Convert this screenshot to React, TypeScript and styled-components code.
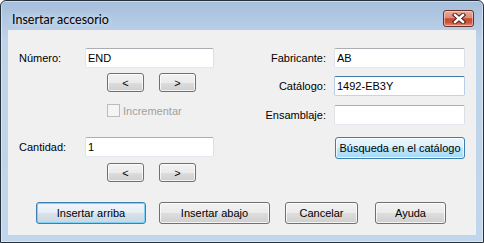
import React from 'react';
import styled, { createGlobalStyle } from 'styled-components';

const GlobalStyle = createGlobalStyle`
  html, body {
    margin: 0;
    padding: 0;
    background: #ffffff;
  }
  body {
    font-family: "Liberation Sans", Arial, sans-serif;
    font-size: 11px;
    color: #000;
  }
`;

const Window = styled.div`
  box-sizing: border-box;
  width: 484px;
  height: 243px;
  display: flex;
  flex-direction: column;
  border: 1px solid #26303b;
  border-radius: 6px 6px 0 0;
  padding: 0 7px 7px 7px;
  background: linear-gradient(#a5bedb 0px, #b3cae4 20px, #bed4eb 40px, #c0d6ed 100%);
  box-shadow: inset 0 0 0 1px rgba(255, 255, 255, 0.45);
`;

const TitleBar = styled.div`
  height: 29px;
  display: flex;
  align-items: flex-start;
  justify-content: space-between;
  padding: 0 2px 0 4px;
`;

const Title = styled.div`
  font-family: "Lato", "Liberation Sans", sans-serif;
  font-size: 12.5px;
  margin-top: 11px;
  color: #000;
  text-shadow: 0 0 6px rgba(255, 255, 255, 0.9);
`;

const CloseButton = styled.button`
  box-sizing: border-box;
  width: 31px;
  height: 17px;
  margin-top: 9px;
  padding: 0;
  display: flex;
  align-items: center;
  justify-content: center;
  border: 1px solid #6b3128;
  border-radius: 3px;
  background: linear-gradient(#e8ab9d 0%, #dc8b79 45%, #c8472f 52%, #cd563f 78%, #e2937f 100%);
  box-shadow: inset 0 0 0 1px rgba(255, 220, 210, 0.55);
`;

const Client = styled.div`
  flex: 1;
  display: flex;
  flex-direction: column;
  background: #f0f0f0;
  padding: 18px 0 0 11px;
`;

const Top = styled.div`
  display: flex;
`;

const LeftCol = styled.div`
  width: 219px;
  display: flex;
  flex-direction: column;
`;

const RightCol = styled.div`
  display: flex;
  flex-direction: column;
`;

const Row = styled.div<{ $mt?: number }>`
  display: flex;
  align-items: center;
  margin-top: ${p => p.$mt ?? 0}px;
`;

const Label = styled.label<{ $w: number; $right?: boolean }>`
  width: ${p => p.$w}px;
  text-align: ${p => (p.$right ? 'right' : 'left')};
  white-space: nowrap;
`;

const TextBox = styled.input<{ $w: number; $focus?: boolean; $ml?: number }>`
  box-sizing: border-box;
  width: ${p => p.$w}px;
  height: 20px;
  margin: 0 0 0 ${p => p.$ml ?? 0}px;
  padding: 0 0 0 2px;
  font-family: "Liberation Sans", Arial, sans-serif;
  font-size: 11px;
  color: #000;
  background: #fff;
  border: 1px solid;
  border-radius: 2px;
  border-color: ${p =>
    p.$focus ? '#3d7bad #b5cfe7 #b7d9ed #b5cfe7' : '#abadb3 #dbdfe6 #e3e9ef #e2e3ea'};
  outline: none;
`;

const Indent = styled.div<{ $ml: number; $mt: number }>`
  display: flex;
  align-items: center;
  gap: 15px;
  margin-left: ${p => p.$ml}px;
  margin-top: ${p => p.$mt}px;
`;

const Button = styled.button<{ $w: number; $h: number; $kind?: 'default' | 'hot'; $ml?: number }>`
  box-sizing: border-box;
  width: ${p => p.$w}px;
  height: ${p => p.$h}px;
  margin: 0 0 0 ${p => p.$ml ?? 0}px;
  padding: 0;
  font-family: "Liberation Sans", Arial, sans-serif;
  font-size: 11px;
  color: #000;
  border-radius: 3px;
  border: 1px solid ${p => (p.$kind ? '#3c7fb1' : '#707070')};
  background: ${p =>
    p.$kind === 'hot'
      ? 'linear-gradient(#eaf6fd 0%, #d9f0fc 50%, #bee6fd 51%, #a7d9f5 100%)'
      : p.$kind === 'default'
      ? 'linear-gradient(#f0f5f9 0%, #e6eef4 50%, #d8e2ea 51%, #cad6e0 100%)'
      : 'linear-gradient(#f2f2f2 0%, #ebebeb 50%, #dddddd 51%, #cfcfcf 100%)'};
  box-shadow: inset 0 0 0 1px
    ${p => (p.$kind === 'default' ? '#7fd2f6' : 'rgba(255, 255, 255, 0.75)')};
`;

const CheckRow = styled.div`
  display: flex;
  align-items: center;
  gap: 3px;
  margin-left: 88px;
  margin-top: 12px;
  height: 13px;
  color: #a0a0a0;
`;

const CheckBox = styled.span`
  box-sizing: border-box;
  width: 13px;
  height: 13px;
  border: 1px solid #bcbcbc;
  background: #f4f4f4;
`;

const BottomRow = styled.div`
  display: flex;
  margin-top: 20px;
  margin-left: 17px;
`;

const CloseGlyph = () => (
  <svg width="14" height="11" viewBox="0 0 14 11">
    <path d="M3 2 L11 9 M11 2 L3 9" stroke="#4a2019" strokeWidth="4.4" strokeLinecap="square" />
    <path d="M3 2 L11 9 M11 2 L3 9" stroke="#ffffff" strokeWidth="2.4" strokeLinecap="square" />
  </svg>
);

export default function App() {
  return (
    <>
      <GlobalStyle />
      <Window>
        <TitleBar>
          <Title>Insertar accesorio</Title>
          <CloseButton aria-label="Cerrar">
            <CloseGlyph />
          </CloseButton>
        </TitleBar>
        <Client>
          <Top>
            <LeftCol>
              <Row>
                <Label $w={66}>Número:</Label>
                <TextBox $w={129} defaultValue="END" />
              </Row>
              <Indent $ml={88} $mt={5}>
                <Button $w={37} $h={19}>&lt;</Button>
                <Button $w={37} $h={19}>&gt;</Button>
              </Indent>
              <CheckRow>
                <CheckBox />
                <span>Incrementar</span>
              </CheckRow>
              <Row $mt={20}>
                <Label $w={66}>Cantidad:</Label>
                <TextBox $w={129} defaultValue="1" />
              </Row>
              <Indent $ml={88} $mt={6}>
                <Button $w={37} $h={19}>&lt;</Button>
                <Button $w={37} $h={19}>&gt;</Button>
              </Indent>
            </LeftCol>
            <RightCol>
              <Row>
                <Label $w={88} $right>Fabricante:</Label>
                <TextBox $w={131} $ml={8} defaultValue="AB" />
              </Row>
              <Row $mt={8}>
                <Label $w={88} $right>Catálogo:</Label>
                <TextBox $w={131} $ml={8} $focus defaultValue="1492-EB3Y" />
              </Row>
              <Row $mt={9}>
                <Label $w={88} $right>Ensamblaje:</Label>
                <TextBox $w={131} $ml={8} defaultValue="" />
              </Row>
              <Row $mt={12}>
                <Button $w={130} $h={22} $kind="hot" $ml={97}>
                  Búsqueda en el catálogo
                </Button>
              </Row>
            </RightCol>
          </Top>
          <BottomRow>
            <Button $w={110} $h={22} $kind="default">Insertar arriba</Button>
            <Button $w={111} $h={22} $ml={13}>Insertar abajo</Button>
            <Button $w={73} $h={22} $ml={15}>Cancelar</Button>
            <Button $w={71} $h={22} $ml={17}>Ayuda</Button>
          </BottomRow>
        </Client>
      </Window>
    </>
  );
}
